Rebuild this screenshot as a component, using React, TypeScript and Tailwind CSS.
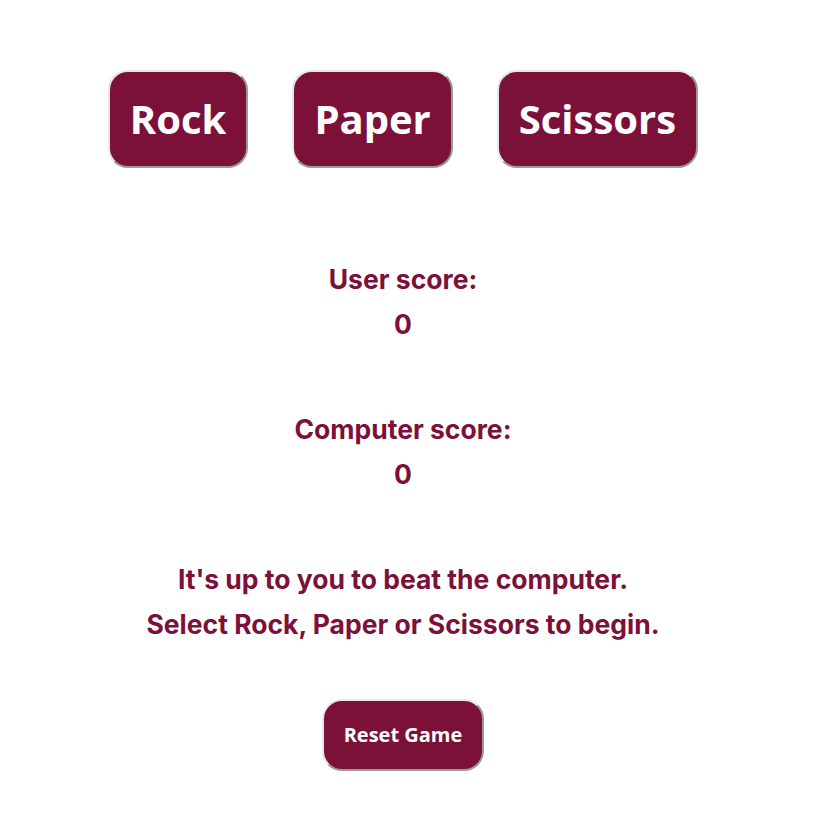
export default function App() {
  const btn =
    "bg-[#7b1139] text-white font-bold border-2 border-t-[#e6e6e6] border-l-[#e6e6e6] border-r-[#9a9a9a] border-b-[#9a9a9a] rounded-[20px] px-5 py-5 leading-[1.362] [font-family:'Open_Sans',sans-serif]";
  const txt =
    "text-[#7b1139] text-[26.5px] font-bold leading-[45px] [font-family:Inter,sans-serif]";
  return (
    <div className="min-h-[829px] bg-white flex flex-col items-center pr-[10px] pt-[70px]">
      <div className="flex gap-[44px]">
        <button className={`${btn} text-[40px]`}>Rock</button>
        <button className={`${btn} text-[40px]`}>Paper</button>
        <button className={`${btn} text-[40px]`}>Scissors</button>
      </div>
      <div className={`${txt} mt-[89px] text-center`}>
        <div>User score:</div>
        <div>0</div>
      </div>
      <div className={`${txt} mt-[60px] text-center`}>
        <div>Computer score:</div>
        <div>0</div>
      </div>
      <div className={`${txt} mt-[60px] text-center`}>
        <div>It's up to you to beat the computer.</div>
        <div>Select Rock, Paper or Scissors to begin.</div>
      </div>
      <button className={`${btn} text-[20px] mt-[52px]`}>Reset Game</button>
    </div>
  );
}
